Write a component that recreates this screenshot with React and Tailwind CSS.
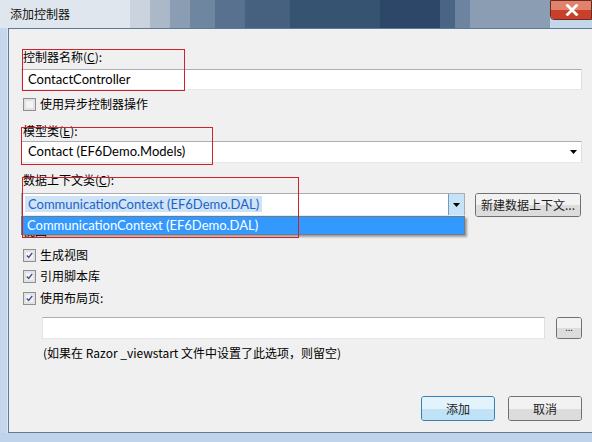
import React from 'react';

const font = { fontFamily: '"Noto Sans CJK SC", "Noto Sans", sans-serif' };
const latin = { fontFamily: 'Lato, "Noto Sans CJK SC", sans-serif' };

function CheckBox({ checked }) {
	return (
		<div className="w-[13px] h-[13px] border border-[#8e8f8f] bg-[#e2e2e2] p-[2px] shrink-0">
			<div className="w-full h-full bg-[#f4f4f4] flex items-center justify-center">
				{checked && (
					<svg width="9" height="9" viewBox="0 0 9 9">
						<path d="M1 4.5 L3.5 7 L8 1.2" fill="none" stroke="#3d4f8c" strokeWidth="1.8" />
					</svg>
				)}
			</div>
		</div>
	);
}

function Arrow() {
	return (
		<svg width="7" height="4" viewBox="0 0 7 4">
			<path d="M0 0 H7 L3.5 4 Z" fill="#000" />
		</svg>
	);
}

function Button({ children, className = '', top = 'bg-[#f2f2f2]', bottom = 'bg-[#dcdcdc]' }) {
	return (
		<div className={`relative rounded-[3px] border overflow-hidden text-[#222] ${className}`}>
			<div className="absolute inset-0 flex flex-col">
				<div className={`flex-1 ${top}`} />
				<div className={`flex-1 ${bottom}`} />
			</div>
			<div className="relative h-full flex items-center justify-center">{children}</div>
		</div>
	);
}

const titleBands = [
	['w-[130px]', 'bg-[#e0e6ed]'],
	['w-[20px]', 'bg-[#cbd4de]'],
	['w-[20px]', 'bg-[#aab8c8]'],
	['w-[20px]', 'bg-[#8a9db3]'],
	['w-[25px]', 'bg-[#6f86a1]'],
	['w-[30px]', 'bg-[#58718f]'],
	['w-[45px]', 'bg-[#46617f]'],
	['w-[90px]', 'bg-[#375372]'],
	['w-[60px]', 'bg-[#2c4767]'],
	['w-[15px]', 'bg-[#4a6583]'],
	['w-[15px]', 'bg-[#6d84a0]'],
	['w-[80px]', 'bg-[#8b9db3]'],
];

export default function App() {
	return (
		<div className="relative w-[592px] h-[442px] overflow-hidden bg-[#c3d6ea] text-[12px] text-black" style={font}>
			{/* title bar */}
			<div className="relative flex h-[28px] shrink-0">
				{titleBands.map(([w, bg], i) => (
					<div key={i} className={`${w} h-full ${bg}`} />
				))}
				<div className="w-[42px] h-[20px] border border-[#6b2a22] rounded-bl-[4px] overflow-hidden flex flex-col">
					<div className="h-[9px] bg-[#e0836a]" />
					<div className="flex-1 bg-[#c8402a]" />
				</div>
				<div className="absolute left-[10px] top-[6px] text-[12px] leading-[16px] text-[#111]">添加控制器</div>
				<div className="absolute right-[13px] top-[4px]">
					<svg width="14" height="12" viewBox="0 0 14 12">
						<path d="M2.5 1.5 L11.5 10.5 M11.5 1.5 L2.5 10.5" stroke="#fff" strokeWidth="2.8" strokeLinecap="square" />
					</svg>
				</div>
			</div>

			<div className="flex h-[405px]">
				<div className="w-[8px] bg-[#c4d7eb] border-r border-[#dbe7f3]" />
				<div className="flex-1 border-l border-t border-b border-[#5d7a99] bg-[#f0f0f0] pl-[12px] pr-[10px] pt-[20px]">
					<div className="leading-[16px] pl-[2px]">控制器名称(<span className="underline">C</span>):</div>
					<div className="mt-[4px] h-[21px] bg-white border border-[#abadb3] border-b-[#e3e9ef] border-l-[#e2e3ea] border-r-[#dbdfe6] flex items-center pl-[6px] text-[13px]" style={latin}>
						ContactController
					</div>
					<div className="mt-[6px] h-[16px] flex items-center gap-[4px] pl-[2px]">
						<CheckBox />
						<span>使用异步控制器操作</span>
					</div>
					<div className="mt-[11px] leading-[16px] pl-[2px]">模型类(<span className="underline">E</span>):</div>
					<div className="mt-[2px] h-[22px] bg-white border border-[#abadb3] border-b-[#e3e9ef] border-l-[#e2e3ea] border-r-[#dbdfe6] flex items-center justify-between pl-[6px] pr-[4px] text-[13px]" style={latin}>
						<span>Contact (EF6Demo.Models)</span>
						<Arrow />
					</div>
					<div className="mt-[9px] leading-[16px] pl-[2px]">数据上下文类(<span className="underline">C</span>):</div>
					<div className="mt-[5px] flex items-start gap-[10px]">
						<div className="relative w-[444px]">
							<div className="h-[23px] bg-white border border-[#abadb3] border-b-[#e3e9ef] flex items-center pl-[3px]">
								<span className="flex-1 text-[13px]" style={latin}>
									<span className="bg-[#cfe3f7] text-[#1d62c7] px-[3px]">CommunicationContext (EF6Demo.DAL)</span>
								</span>
								<div className="w-[16px] h-full border-l border-[#6e9cc3] bg-[#c6e2f6] flex items-center justify-center">
									<Arrow />
								</div>
							</div>
							{/* dropdown list */}
							<div className="absolute left-0 top-[23px] w-full h-[19px] z-10 bg-[#3399ff] border border-[#6b7c8c] shadow-[2px_2px_2px_rgba(0,0,0,0.35)] flex items-center pl-[5px] text-white text-[13px]" style={latin}>
								CommunicationContext (EF6Demo.DAL)
							</div>
						</div>
						<Button className="w-[106px] h-[24px] border-[#707070]">新建数据上下文...</Button>
					</div>
					<div className="mt-[6px] leading-[16px] pl-[2px]">视图</div>
					<div className="mt-[8px] h-[16px] flex items-center gap-[4px] pl-[2px]">
						<CheckBox checked />
						<span>生成视图</span>
					</div>
					<div className="mt-[5px] h-[16px] flex items-center gap-[4px] pl-[2px]">
						<CheckBox checked />
						<span>引用脚本库</span>
					</div>
					<div className="mt-[6px] h-[16px] flex items-center gap-[4px] pl-[2px]">
						<CheckBox checked />
						<span>使用布局页:</span>
					</div>
					<div className="mt-[11px] flex items-center gap-[11px] pl-[21px]">
						<div className="flex-1 h-[22px] bg-white border border-[#abadb3] border-b-[#e3e9ef] border-l-[#e2e3ea] border-r-[#dbdfe6]" />
						<Button className="w-[26px] h-[22px] border-[#707070] text-[9px] leading-none">
							<span className="pb-[2px]">...</span>
						</Button>
					</div>
					<div className="mt-[6px] leading-[16px] pl-[22px]">(如果在 Razor _viewstart 文件中设置了此选项，则留空)</div>
					<div className="mt-[35px] flex justify-end gap-[13px]">
						<Button
							className="w-[74px] h-[25px] border-[#3c7fb1] shadow-[inset_0_0_0_1px_#48d7f9]"
							top="bg-[#e3f3fc]"
							bottom="bg-[#bfe2f6]"
						>
							添加
						</Button>
						<Button className="w-[74px] h-[25px] border-[#707070]">取消</Button>
					</div>
				</div>
			</div>
			<div className="h-[9px] bg-[#bfd4ea]" />

			{/* annotation boxes */}
			<div className="absolute left-[22px] top-[49px] w-[163px] h-[42px] border border-[#d0202a] pointer-events-none z-20" />
			<div className="absolute left-[21px] top-[127px] w-[192px] h-[38px] border border-[#d0202a] pointer-events-none z-20" />
			<div className="absolute left-[22px] top-[177px] w-[277px] h-[61px] border border-[#d0202a] pointer-events-none z-20" />
		</div>
	);
}
